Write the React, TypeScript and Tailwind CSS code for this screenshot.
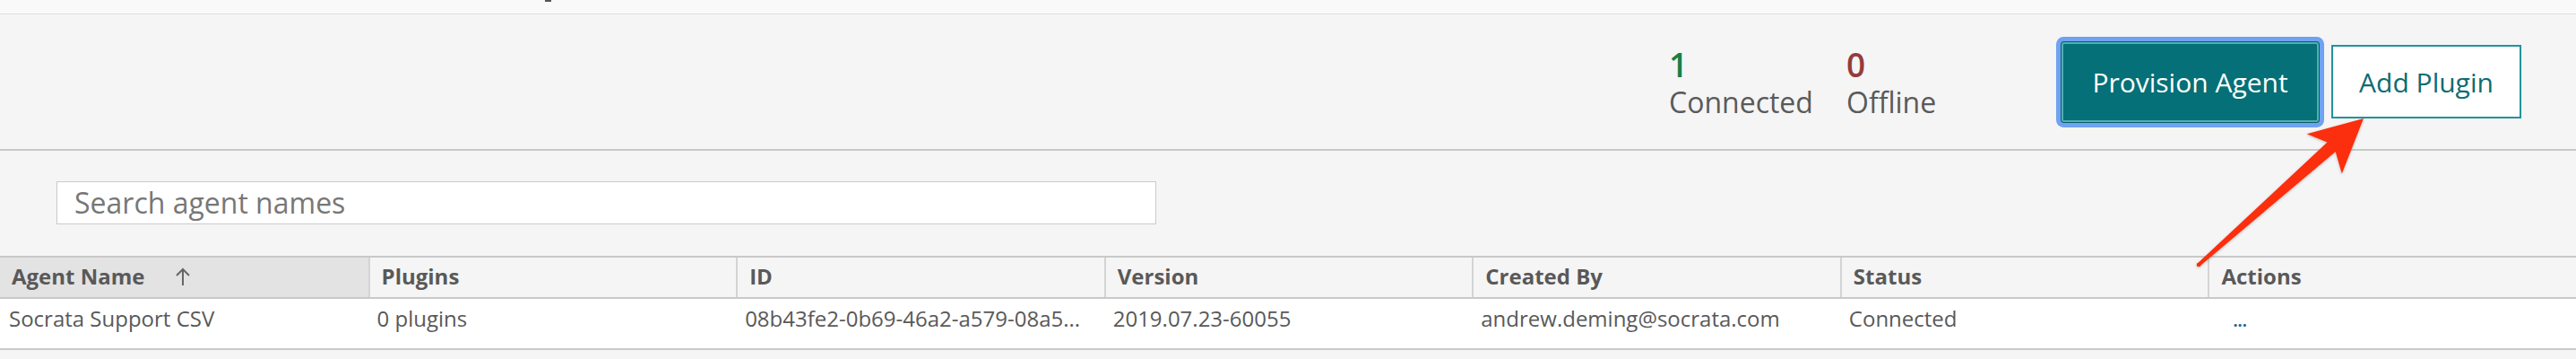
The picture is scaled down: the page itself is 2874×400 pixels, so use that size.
import React from "react";

const columns = ["Agent Name", "Plugins", "ID", "Version", "Created By", "Status", "Actions"];

const row = [
  "Socrata Support CSV",
  "0 plugins",
  "08b43fe2-0b69-46a2-a579-08a5...",
  "2019.07.23-60055",
  "andrew.deming@socrata.com",
  "Connected",
];

function SortUp() {
  return (
    <svg width="18" height="22" viewBox="0 0 18 22" className="ml-[34px] shrink-0">
      <path d="M9 21V3M2 10l7-7 7 7" fill="none" stroke="#666" strokeWidth="2" />
    </svg>
  );
}

// red callout arrow pointing at "Add Plugin"
function Callout() {
  return (
    <svg
      className="pointer-events-none absolute left-0 top-0"
      width="2874"
      height="400"
      viewBox="0 0 2874 400"
    >
      <defs>
        <filter id="shadow" x="-10%" y="-10%" width="120%" height="120%">
          <feDropShadow dx="0" dy="1" stdDeviation="1.5" floodColor="#000" floodOpacity="0.25" />
        </filter>
      </defs>
      <g filter="url(#shadow)" fill="#fb2d0a">
        <polygon points="2451.7,293.5 2596.5,158.5 2573.7,149.3 2637,132 2612.8,193.4 2605.7,168.9 2454.3,296.5" />
        <circle cx="2453" cy="295" r="2.3" />
      </g>
    </svg>
  );
}

export default function App() {
  return (
    <div className="relative h-[400px] w-[2874px] overflow-hidden bg-[#f5f5f5] font-['Open_Sans',sans-serif] text-[#555]">
      {/* cut-off strip from the page above */}
      <div className="h-[16px] border-b border-[#dedede] bg-[#f9f9f9]">
        <div className="ml-[608px] h-[2px] w-[7px] bg-[#555]" />
      </div>

      {/* summary + actions */}
      <div className="flex h-[152px] items-center justify-end border-b-2 border-[#c9c9c9] pr-[61px]">
        <div className="mt-[4px] flex w-[198px] flex-col gap-[2px]">
          <span className="text-[37px] font-semibold leading-[40px] text-[#17803f]">1</span>
          <span className="text-[32px] leading-[40px] text-[#5a5a5a]">Connected</span>
        </div>
        <div className="mt-[4px] flex w-[240px] flex-col gap-[2px]">
          <span className="text-[37px] font-semibold leading-[40px] text-[#943c3c]">0</span>
          <span className="text-[32px] leading-[40px] text-[#5a5a5a]">Offline</span>
        </div>
        <button className="flex h-[89px] w-[287px] items-center justify-center rounded-[3px] border-2 border-[#4fb0b6] bg-[#057077] text-[30px] text-white shadow-[0_0_0_1px_#0a5d63,0_0_0_6px_#6fa2f1]">
          Provision Agent
        </button>
        <button className="ml-[14px] flex h-[82px] w-[212px] items-center justify-center border-2 border-[#1f959b] bg-white text-[30px] text-[#0c6c73]">
          Add Plugin
        </button>
      </div>

      {/* search */}
      <div className="h-[117px] pl-[63px] pt-[34px]">
        <div className="flex h-[48px] w-[1227px] items-center border-[1.5px] border-[#cacaca] bg-white pl-[19px] text-[32px] text-[#777]">
          Search agent names
        </div>
      </div>

      {/* table */}
      <div className="border-t-2 border-[#c9c9c9]">
        <div className="grid h-[46px] grid-cols-7 border-b-2 border-[#c9c9c9]">
          {columns.map((c, i) => (
            <div
              key={c}
              className={`flex h-[44px] items-center pb-[2px] pl-[13px] text-[24px] font-bold leading-[32px] text-[#595959] ${
                i === 0 ? "bg-[#e3e3e3]" : "border-l-2 border-[#d4d4d4] bg-[#f5f5f5]"
              }`}
            >
              {c}
              {i === 0 && <SortUp />}
            </div>
          ))}
        </div>
        <div className="grid h-[57px] grid-cols-7 border-b-2 border-[#c9c9c9] bg-white">
          {row.map((v, i) => (
            <div key={i} className="truncate pl-[10px] pt-[6px] text-[24px] leading-[32px] text-[#595959]">
              {v}
            </div>
          ))}
          <div className="pl-[28px] pt-[12px] text-[18px] font-bold leading-[24px] text-[#2a6594]">...</div>
        </div>
      </div>

      <Callout />
    </div>
  );
}
